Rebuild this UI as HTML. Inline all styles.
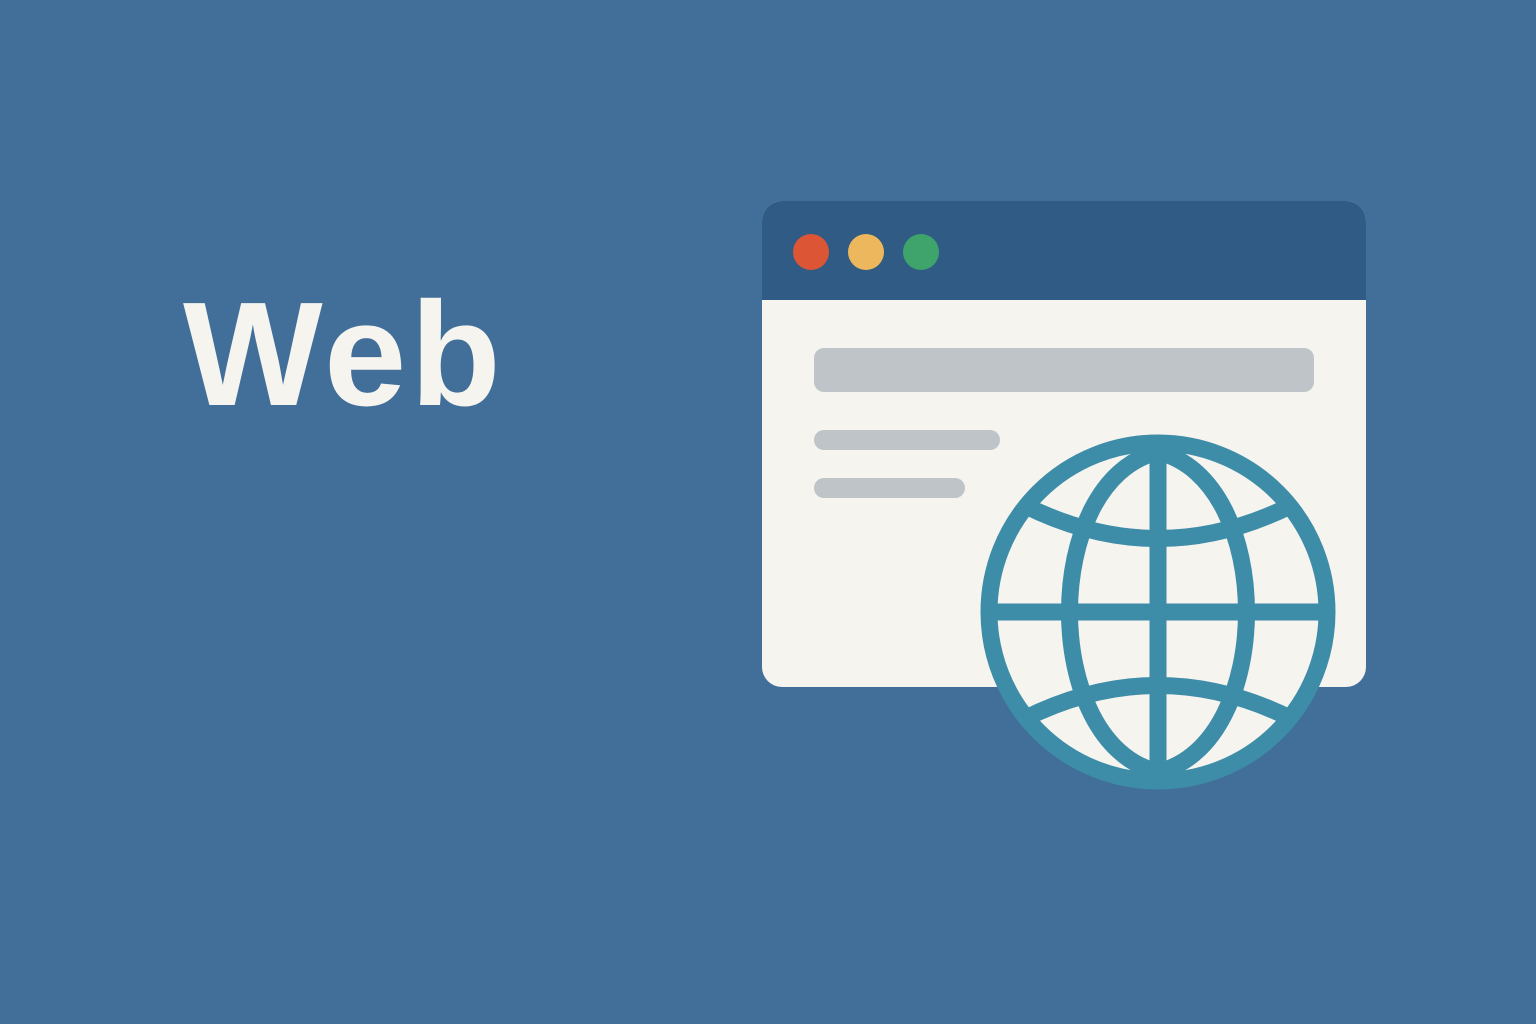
<!DOCTYPE html>
<html><head><style>
html,body{margin:0;padding:0;}
body{width:1536px;height:1024px;background:#416f99;position:relative;overflow:hidden;font-family:"Liberation Sans",sans-serif;}
.t{position:absolute;left:183px;top:281px;font-size:148px;font-weight:bold;color:#f5f4ef;line-height:1;letter-spacing:4px;}
</style></head><body>
<div class="t">Web</div>
<svg width="1536" height="1024" style="position:absolute;left:0;top:0">
<rect x="762" y="201" width="604" height="486" rx="20" fill="#f5f4ef"/>
<path d="M782 201 H1346 A20 20 0 0 1 1366 221 V300 H762 V221 A20 20 0 0 1 782 201Z" fill="#305b84"/>
<circle cx="811" cy="252" r="18" fill="#dc5534"/>
<circle cx="866" cy="252" r="18" fill="#ecb75d"/>
<circle cx="921" cy="252" r="18" fill="#3ea46c"/>
<rect x="814" y="348" width="500" height="44" rx="10" fill="#bfc4c8"/>
<rect x="814" y="430" width="186" height="20" rx="10" fill="#bfc4c8"/>
<rect x="814" y="478" width="151" height="20" rx="10" fill="#bfc4c8"/>
<g fill="none" stroke="#3d8ca8" stroke-width="17">
<circle cx="1158" cy="612" r="169" fill="#f5f4ef"/>
<path d="M1158 452 C1040 480 1040 744 1158 772 C1276 744 1276 480 1158 452Z"/>
<line x1="1158" y1="445" x2="1158" y2="780"/>
<line x1="990" y1="612" x2="1326" y2="612"/>
<path d="M1024 505 Q1158 572 1292 505"/>
<path d="M1024 719 Q1158 652 1292 719"/>
</g>
</svg>
</body></html>
